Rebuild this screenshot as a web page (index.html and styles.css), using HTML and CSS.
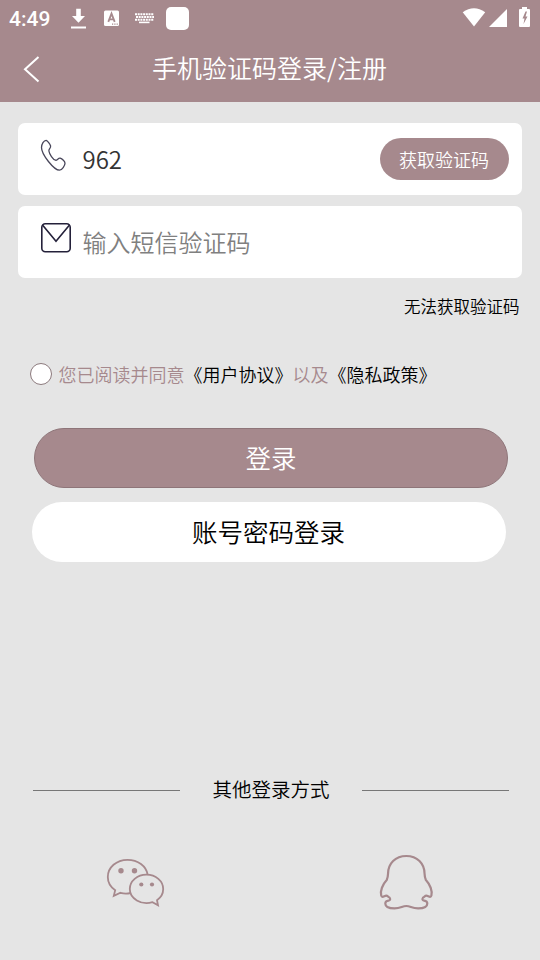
FILE: index.html
```html
<!DOCTYPE html>
<html lang="zh-CN">
<head>
<meta charset="utf-8">
<title>手机验证码登录/注册</title>
<link rel="stylesheet" href="styles.css">
</head>
<body>
<header class="top">
  <div class="status">
    <span class="clock">4:49</span>
    <svg class="notifications" width="126" height="36" viewBox="68 0 126 36">
      <path d="M76.200 8.700h4.600v7.300h4.200l-6.500 6.700-6.500-6.700h4.200zM71 26.600h15v2H71z" fill="#fff"/>
      <rect x="104" y="10.500" width="15" height="15.500" rx="1.500" fill="#fff"/>
      <path d="M108.300 21.800l3.200-8.200 3.200 8.200M109.300 19.300h4.400" fill="none" stroke="#a6898d" stroke-width="1.800"/>
      <path d="M112 24.200h6" stroke="#a6898d" stroke-width="1.200" stroke-dasharray="1.200 1.100"/>
      <path d="M135 14.200h19M136 17h18M135 19.800h19" stroke="#fff" stroke-width="1.900" stroke-dasharray="2 .7"/>
      <path d="M139 22.400h10.500" stroke="#fff" stroke-width="1.600"/>
      <rect x="166" y="7" width="23" height="23" rx="5" fill="#fff"/>
    </svg>
    <svg class="signals" width="70" height="36" viewBox="462 0 70 36" fill="#fff">
      <path d="M462.700 12.300Q474 4 485.200 12.300L474 26.500z"/>
      <path d="M507 9v18h-18z"/>
      <path d="M519 10q0-1 1-1h2V7h5v2h2q1 0 1 1v16q0 1-1 1h-9q-1 0-1-1z"/>
      <path d="M525.500 11.500l-3 7h2l-1 5.500 4-7.500h-2l1.500-5z" fill="#a6898d"/>
    </svg>
  </div>
  <div class="navbar">
    <svg class="back" width="20" height="30" viewBox="0 0 20 30"><path d="M15.500 3L2 15.200 15.500 27.500" fill="none" stroke="#fff" stroke-width="2"/></svg>
    <h1 class="title">手机验证码登录/注册</h1>
  </div>
</header>
<main class="content">
  <div class="field">
    <svg class="field-icon" width="32" height="36" viewBox="40 137 32 36"><path d="M46.200 140.300C47.300 140.500 50.300 144.500 50.600 146C51 148.200 48.500 149.200 48.900 151C49.400 154.200 53 159.500 55.500 160.200C57.400 160.600 58.200 157.700 60.200 158.200C62.200 158.800 65 161.500 65 163.200C65 165.500 62 170.200 59.500 170.200C54 170.200 41.500 154.500 41.500 147.500C41.500 144.200 43.800 140.200 46.200 140.300Z" fill="none" stroke="#48465a" stroke-width="1.300"/></svg>
    <span class="value">962</span>
    <button class="code-button">获取验证码</button>
  </div>
  <div class="field">
    <svg class="field-icon" width="32" height="36" viewBox="40 220 32 36"><g fill="none" stroke="#24213a" stroke-width="1.600"><rect x="41.800" y="223.800" width="28.400" height="28" rx="3.500"/><path d="M42.500 225L56 241.200 69.500 225"/></g></svg>
    <span class="placeholder">输入短信验证码</span>
  </div>
  <a class="help">无法获取验证码</a>
  <div class="terms"><span class="radio"></span><span class="terms-text">您已阅读并同意<a>《用户协议》</a>以及<a>《隐私政策》</a></span></div>
  <button class="button primary">登录</button>
  <button class="button secondary">账号密码登录</button>
</main>
<footer class="other">
  <div class="divider"><span class="rule"></span><span class="divider-text">其他登录方式</span><span class="rule"></span></div>
  <div class="providers">
    <svg width="62" height="60" viewBox="105 850 62 60">
      <path d="M130.500 893Q125.500 894.200 120.500 892.800L113.800 895.800L115.200 890.200C110.500 887 107.800 882.500 107.800 877C107.800 867.300 116.500 859.800 127.500 859.800C138 859.800 146.200 866 147.600 874.500" fill="none" stroke="#a6898d" stroke-width="1.800"/>
      <path d="M146.500 874.700C155.800 874.700 163.200 881 163.200 889C163.200 893.700 160.900 897.500 157 900.200L158 905.200L152.500 902.200C141 905.500 129.800 898.500 129.800 889C129.800 881 137.200 874.700 146.500 874.700Z" fill="none" stroke="#a6898d" stroke-width="1.800"/>
      <g fill="#a6898d"><circle cx="121" cy="870.700" r="2.700"/><circle cx="134.500" cy="870.700" r="2.700"/><circle cx="141.300" cy="884.500" r="2.100"/><circle cx="152" cy="884.500" r="2.100"/></g>
    </svg>
    <svg width="62" height="60" viewBox="375 850 62 60">
      <path d="M406.300 856C395.500 856 388 863.500 388 874C388 876.500 387.500 878 386.700 880C382.500 884.500 380 891 381.200 895.500C382 898.500 384.500 895.700 386.200 895.700C388 895.700 387.800 897 389.500 897.500C390.500 899 390.500 900.500 388.500 900.700C386.500 901 385.300 902 385.300 903.500C385.300 907.200 389.500 908.400 394.500 908.400C401 908.400 402 906 406.300 906C410.600 906 411.600 908.400 418.100 908.400C423.100 908.400 427.300 907.200 427.300 903.500C427.300 902 426.100 901 424.100 900.700C422.100 900.500 422.100 899 423.100 897.500C424.800 897 424.600 895.700 426.400 895.700C428.100 895.700 430.600 898.500 431.400 895.500C432.600 891 430.100 884.500 425.900 880C425.100 878 424.600 876.500 424.600 874C424.600 863.500 417.100 856 406.300 856Z" fill="none" stroke="#a6898d" stroke-width="2.200" stroke-linejoin="round"/>
    </svg>
  </div>
</footer>
</body>
</html>
```
FILE: styles.css
```css
* { box-sizing: border-box; }
body {
  margin: 0;
  height: 960px;
  display: flex;
  flex-direction: column;
  background: #e5e5e5;
  color: #000;
  font-family: "Noto Sans CJK SC", sans-serif;
  font-weight: 350;
}
svg { display: block; flex: none; }
button { border: 0; padding: 0; font-family: inherit; font-weight: inherit; }
.top { height: 102px; background: #a6898d; color: #fff; }
.status { height: 36px; display: flex; align-items: center; padding: 0 8px 0 9px; }
.clock { width: 59px; font: 500 21px/36px Roboto, sans-serif; padding-top: 1px; }
.signals { margin-left: auto; }
.navbar {
  height: 66px;
  display: grid;
  grid-template-columns: 20px 1fr 20px;
  align-items: start;
  padding: 0 24px 0 23px;
}
.back { margin-top: 18px; }
.title { margin: 13px 0 0; text-align: center; font-size: 25px; line-height: 36px; font-weight: inherit; }
.content { display: flex; flex-direction: column; padding: 21px 18px 0; }
.field {
  height: 72px;
  margin-bottom: 11px;
  padding: 0 13px 0 22px;
  display: flex;
  align-items: center;
  background: #fff;
  border-radius: 7px;
  font-size: 24px;
  line-height: 36px;
}
.field-icon { margin: -8px 10.5px 0 0; }
.value { color: #333; }
.placeholder { color: #808080; }
.code-button {
  margin-left: auto;
  width: 129px;
  height: 42px;
  padding: 0 1px 1px 0;
  border-radius: 21px;
  background: #a6898d;
  color: #fff;
  font-size: 18px;
}
.help { align-self: flex-end; margin: 5px 2.5px 0 0; font-size: 16.5px; line-height: 25px; }
.terms { display: flex; align-items: center; margin: 42px 0 0 12px; height: 26px; color: #a6898d; }
.terms a { color: #000; }
.terms-text { font-size: 18px; line-height: 26px; white-space: nowrap; }
.radio { width: 22px; height: 22px; margin: 0 6.5px 1px 0; border: 1px solid #8c7a7d; border-radius: 50%; background: #fff; }
.button { width: 474px; height: 60px; border-radius: 30px; font-size: 25.5px; line-height: 56px; padding-bottom: 2px; }
.primary { margin: 41px 0 0 16px; border: 1px solid #8e7579; background: #a6898d; color: #fff; }
.secondary { margin: 14px 0 0 14px; padding-right: 1px; background: #fff; color: #000; }
.other { margin-top: auto; height: 185px; }
.divider { display: flex; align-items: center; justify-content: space-between; height: 30px; padding: 0 31px 0 33px; }
.rule { width: 147px; height: 1px; background: #777; }
.divider-text { font-size: 19.5px; line-height: 28px; padding-bottom: 2px; }
.providers { display: flex; justify-content: space-between; padding: 45px 103px 0 105px; }
```
